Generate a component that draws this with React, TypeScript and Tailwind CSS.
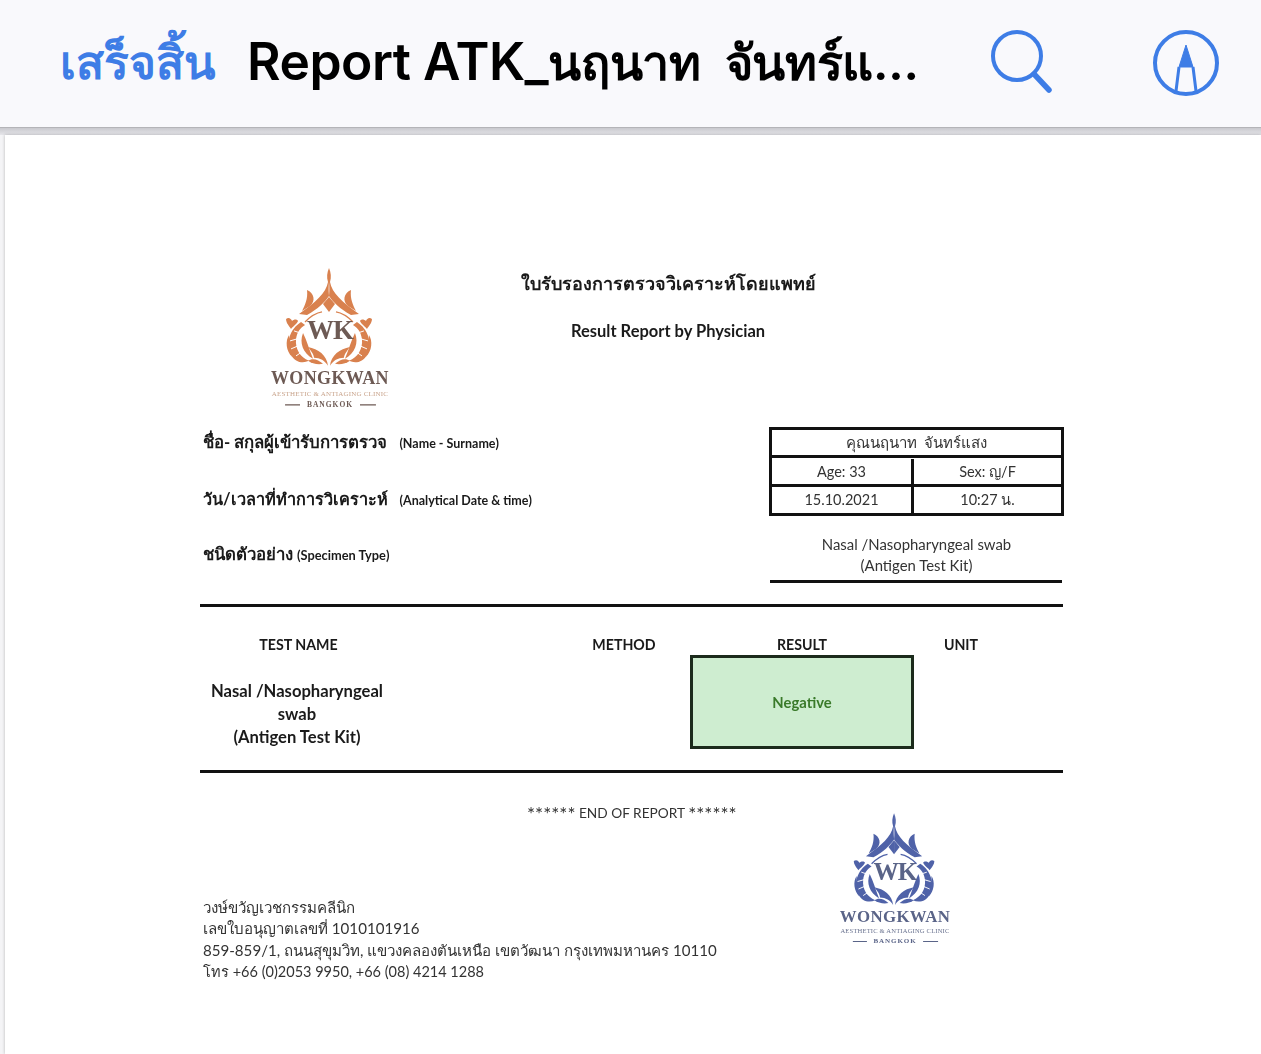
import React from "react";

const docFont = { fontFamily: "Lato, 'Noto Sans', sans-serif" };

function Logo({ main, text, sub, size }: { main: string; text: string; sub: string; size: number }) {
    const half = (
        <g>
            <path d="M79 13 C77 18 76.5 22 78 27 L79 37 Z" />
            <path d="M78 27 C76 38 66 47 49 59 L57 60 C68 54 75 47 79 41 Z" />
            <path d="M57 35 C64 38 66 46 60 51 L52 56 C55 50 58 44 57 35 Z" />
            <path d="M79 42 L73 49 L79 57 Z" />
            <path d="M55 67 C61 61 66 58 72 57" fill="none" stroke={main} strokeWidth="1.4" />
            <path d="M36 64 C39 62 41 64 42 66 C44 64 47 64 48 66 C46 70 42 72 41 74 C39 71 36 68 36 64 Z" />
            <path d="M51 67 C40 74 35 88 41 100 C45 107 52 109 59 106 C50 102 45 94 46 84 C47 77 50 73 55 70 Z" />
            <path d="M53 78 C49 88 53 98 63 104 C59 94 57 86 53 78 Z" />
            <path d="M39 80 C35 86 36 96 42 102 C40 94 39 88 39 80 Z" />
            <path d="M40 86 L47 84 M41 94 L48 91 M44 76 L50 78 M46 101 L52 97" fill="none" stroke="#fff" strokeWidth="1" />
            <path d="M78 111 C77 100 68 94 58 92 C62 97 64 100 64 103 C70 103 75 106 78 111 Z" />
            <path d="M73 109 C68 104 62 103 58 106 C62 109 68 110 73 109 Z" />
        </g>
    );
    return (
        <svg width={size} height={size * 1.03} viewBox="0 0 160 165" className="shrink-0">
            <g fill={main}>
                {half}
                <g transform="translate(158,0) scale(-1,1)">{half}</g>
            </g>
            <text x="80" y="84" textAnchor="middle" fontFamily="'Liberation Serif', serif" fontSize="27" fontWeight="700" fill={text} letterSpacing="-1">WK</text>
            <text x="80" y="129" textAnchor="middle" fontFamily="'Liberation Serif', serif" fontSize="18" fontWeight="700" fill={text} letterSpacing="0.4">WONGKWAN</text>
            <text x="80" y="141" textAnchor="middle" fontFamily="'Liberation Serif', serif" fontSize="7" fill={sub} letterSpacing="0.2">AESTHETIC &amp; ANTIAGING CLINIC</text>
            <text x="80" y="152" textAnchor="middle" fontFamily="'Liberation Serif', serif" fontSize="7.5" fontWeight="700" fill={text} letterSpacing="1">BANGKOK</text>
            <path d="M35 150 H50 M110 150 H126" stroke={text} strokeWidth="1.2" />
        </svg>
    );
}

function Header() {
    return (
        <div className="flex items-center h-[127px] bg-[#f9f9fc] pl-[60px] pb-[4px]" style={{ fontFamily: "Inter, 'Noto Sans', sans-serif" }}>
            <span className="text-[46px] text-[#3e7de6] font-semibold leading-none w-[187px]">เสร็จสิ้น</span>
            <span className="text-black font-semibold leading-none w-[744px] whitespace-nowrap">
                <span className="text-[51.5px] tracking-[-0.5px]">Report ATK_</span>
                <span className="text-[48.5px] tracking-[-0.3px]">นฤนาท&nbsp; จันทร์แ...</span>
            </span>
            <svg width="66" height="68" viewBox="0 0 66 68" className="-ml-[2px] mt-[2px] shrink-0" fill="none" stroke="#3e7de6">
                <ellipse cx="28" cy="27" rx="24" ry="24" strokeWidth="4" />
                <path d="M45 45 L60 61" strokeWidth="5.5" strokeLinecap="round" />
            </svg>
            <svg width="68" height="68" viewBox="0 0 68 68" className="ml-[97px] mt-[2px] shrink-0" fill="none" stroke="#3e7de6">
                <circle cx="34" cy="34" r="31" strokeWidth="4" />
                <path d="M34 16 L27 38 H41 Z" fill="#3e7de6" strokeWidth="1" />
                <path d="M27 38 L24 62 M41 38 L44 62" strokeWidth="3" />
            </svg>
        </div>
    );
}

function Info() {
    return (
        <div className="flex justify-between">
            <div className="text-[#1a1a1a] font-bold pl-[3px]">
                <div className="h-[57px] pt-[3px] text-[16.8px] leading-[24px] whitespace-nowrap">
                    ชื่อ- สกุลผู้เข้ารับการตรวจ <span className="text-[12.5px] ml-[8px]">(Name - Surname)</span>
                </div>
                <div className="h-[55px] pt-[3px] text-[16.3px] leading-[24px] whitespace-nowrap">
                    วัน/เวลาที่ทำการวิเคราะห์ <span className="text-[12.5px] ml-[8px]">(Analytical Date &amp; time)</span>
                </div>
                <div className="pt-[3px] text-[16.8px] leading-[24px] whitespace-nowrap">
                    ชนิดตัวอย่าง <span className="text-[12.8px]">(Specimen Type)</span>
                </div>
            </div>
            <div className="w-[295px] -mr-px text-[14.5px] text-[#333] text-center">
                <div className="border-[3px] border-[#111] h-[89px] flex flex-col">
                    <div className="h-[28px] flex items-center justify-center border-b-[3px] border-[#111] text-[15px]">คุณนฤนาท&nbsp; จันทร์แสง</div>
                    <div className="h-[29px] pt-[1px] flex border-b-[3px] border-[#111]">
                        <div className="w-[142px] flex items-center justify-center border-r-[3px] border-[#111]">Age: 33</div>
                        <div className="flex-1 flex items-center justify-center">Sex: ญ/F</div>
                    </div>
                    <div className="flex-1 flex">
                        <div className="w-[142px] flex items-center justify-center border-r-[3px] border-[#111]">15.10.2021</div>
                        <div className="flex-1 flex items-center justify-center">10:27 น.</div>
                    </div>
                </div>
                <div className="mt-[18px] leading-[21px] text-[14.9px]">
                    Nasal /Nasopharyngeal swab
                    <br />
                    (Antigen Test Kit)
                </div>
                <div className="mt-[4px] h-[3px] bg-[#111] ml-px mr-[2px]" />
            </div>
        </div>
    );
}

function Results() {
    return (
        <div className="text-[#1a1a1a] font-bold">
            <div className="h-[51px] border-t-[3px] border-[#111] mt-[21px] flex items-end text-[14.2px] text-center leading-[20px]">
                <div className="w-[197px]">TEST NAME</div>
                <div className="w-[192px]" />
                <div className="w-[70px]">METHOD</div>
                <div className="w-[108px]" />
                <div className="w-[70px]">RESULT</div>
                <div className="w-[94px]" />
                <div className="w-[60px]">UNIT</div>
            </div>
            <div className="flex">
                <div className="w-[194px] text-center text-[16.6px] leading-[23px] pt-[25px] whitespace-nowrap">
                    Nasal /Nasopharyngeal
                    <br />
                    swab
                    <br />
                    (Antigen Test Kit)
                </div>
                <div className="ml-[296px] w-[224px] h-[94px] border-[3px] border-[#1c2b1c] bg-[#ceedd0] flex items-center justify-center text-[14.8px] text-[#3a7a2a]">
                    Negative
                </div>
            </div>
            <div className="mt-[21px] h-[3px] bg-[#111]" />
        </div>
    );
}

function Footer() {
    return (
        <div className="flex text-[#333] text-[15.1px]">
            <div className="w-[620px] shrink-0">
                <div className="ml-[327px] mt-[30px] whitespace-nowrap leading-[20px] text-[13.7px]">
                    <span className="text-[19px] leading-none align-[-3px]">******</span> END OF REPORT <span className="text-[19px] leading-none align-[-3px]">******</span>
                </div>
                <div className="pl-[3px] mt-[74px] leading-[21.3px] whitespace-nowrap">
                    วงษ์ขวัญเวชกรรมคลีนิก
                    <br />
                    เลขใบอนุญาตเลขที่ 1010101916
                    <br />
                    859-859/1, ถนนสุขุมวิท, แขวงคลองตันเหนือ เขตวัฒนา กรุงเทพมหานคร 10110
                    <br />
                    <span className="text-[14.5px]">โทร +66 (0)2053 9950, +66 (08) 4214 1288</span>
                </div>
            </div>
            <div className="mt-[28px]">
                <Logo main="#4f62a8" text="#5a6488" sub="#6a7390" size={150} />
            </div>
        </div>
    );
}

export default function App() {
    return (
        <div className="h-[1054px] w-[1261px] overflow-hidden bg-[#f4f4f6]">
            <Header />
            <div className="h-px bg-[#b4b4b8]" />
            <div className="h-[7px] bg-gradient-to-b from-[#c9c9ce] to-[#e6e6ea]" />
            <div className="ml-[5px] h-[919px] bg-white pl-[195px] shadow-[0_0_3px_rgba(0,0,0,0.25)]" style={docFont}>
                <div className="w-[863px] pt-[120px] blur-[0.5px]">
                    <div className="flex h-[172px]">
                        <div className="ml-[50px]">
                            <Logo main="#d9814e" text="#6d5a54" sub="#c9a48c" size={160} />
                        </div>
                        <div className="w-[516px] text-center text-[#1a1a1a] font-bold pt-[16px]">
                            <div className="leading-[24px] text-[18px]">ใบรับรองการตรวจวิเคราะห์โดยแพทย์</div>
                            <div className="mt-[24px] leading-[24px] text-[16.5px]">Result Report by Physician</div>
                        </div>
                    </div>
                    <Info />
                    <Results />
                    <Footer />
                </div>
            </div>
        </div>
    );
}
